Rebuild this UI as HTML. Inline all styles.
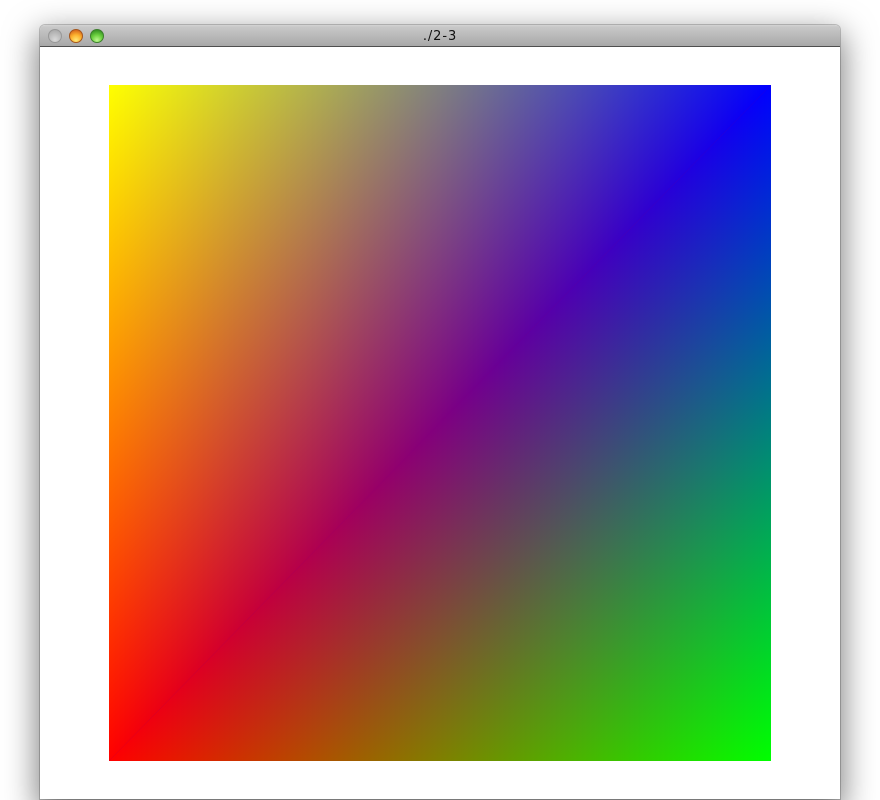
<!DOCTYPE html>
<html>
<head>
<meta charset="utf-8">
<style>
html,body{margin:0;padding:0;background:#fff;}
body{width:880px;height:800px;position:relative;overflow:hidden;font-family:"DejaVu Sans","Liberation Sans",sans-serif;}
#win{position:absolute;left:40px;top:25px;width:800px;height:774px;background:#fff;border-radius:5px 5px 0 0;box-shadow:0 0 0 1px rgba(0,0,0,.2),0 11px 32px 3px rgba(0,0,0,.5);}
#bar{position:absolute;left:0;top:0;width:800px;height:21px;border-radius:5px 5px 0 0;background:linear-gradient(to bottom,#d4d4d4 0,#c8c8c8 2px,#a8a8a8 100%);border-bottom:1px solid #4e4e4e;}
#title{position:absolute;left:0;top:4px;width:800px;text-align:center;font-size:13px;line-height:16px;letter-spacing:.9px;color:#111;}
.b{position:absolute;top:4px;width:14px;height:14px;border-radius:50%;box-sizing:border-box;}
#b1{left:8px;background:radial-gradient(circle at 50% 80%,#d8d8d8 0,#bdbdbd 50%,#a2a2a2 100%);border:1px solid #989898;}
#b2{left:29px;background:radial-gradient(circle at 50% 85%,#ffe877 0,#fdb32e 45%,#d4601a 90%);border:1px solid #a5561c;}
#b3{left:50px;background:radial-gradient(circle at 50% 85%,#bdf890 0,#6bd03f 45%,#2f8a20 90%);border:1px solid #3c7f2c;}
.g{position:absolute;left:109px;top:85px;width:662px;height:676px;background-blend-mode:screen;}
#t1{clip-path:polygon(0 0,100% 0,0 100%);background-image:linear-gradient(to right,#f00,#000),linear-gradient(to right,#000,#00f),linear-gradient(to bottom right,#0f0 0%,#000 50%);}
#t2{clip-path:polygon(100% 0,100% 100%,0 100%);background-image:linear-gradient(to right,#f00,#000),linear-gradient(to bottom,#00f,#000),linear-gradient(to bottom right,#000 50%,#0f0 100%);}
#base{position:absolute;left:109px;top:85px;width:662px;height:676px;background:#800080;}
</style>
</head>
<body>
<div id="win">
  <div id="bar">
    <div class="b" id="b1"></div>
    <div class="b" id="b2"></div>
    <div class="b" id="b3"></div>
    <div id="title">./2-3</div>
  </div>
</div>
<div id="base"></div>
<div class="g" id="t1"></div>
<div class="g" id="t2"></div>
</body>
</html>
